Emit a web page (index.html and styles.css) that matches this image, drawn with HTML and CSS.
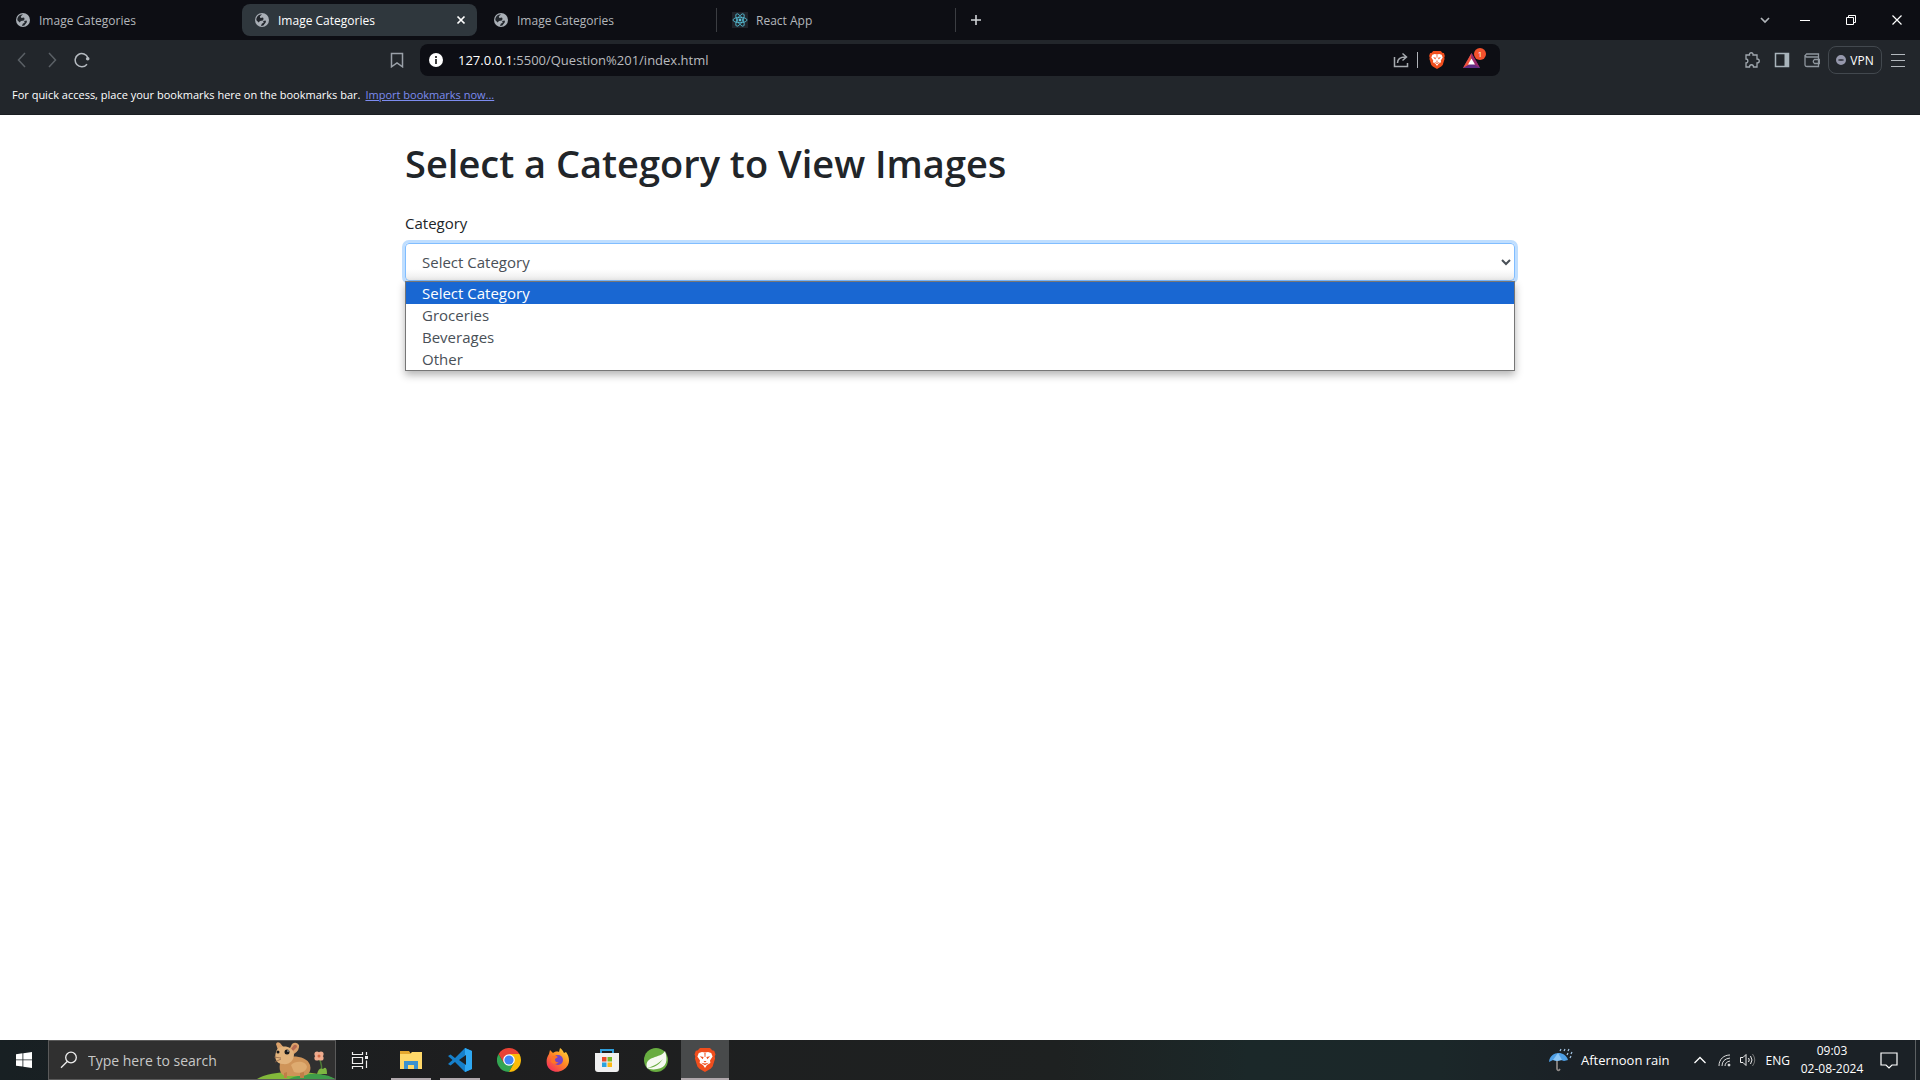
FILE: index.html
```
<!DOCTYPE html>
<html lang="en">
<head>
<meta charset="utf-8">
<title>Image Categories</title>
<link rel="stylesheet" href="styles.css">
</head>
<body>
<svg class="defs" aria-hidden="true">
  <symbol id="globe" viewBox="0 0 16 16">
    <circle cx="8" cy="8" r="7" fill="#a9afb6"/>
    <path d="M8 2.2 5.8 4.6 6.4 6 9 5.6 9.6 7 8.8 8.6 6 9 4.6 10.6 2.4 8.2C2 5 4.6 2.2 8 2.2zM9 9l2.6-.4.4 1.4-2.6 3.6L7 14l.8-2.2 2-1.2z" fill="#23272d"/>
  </symbol>
  <symbol id="brave" viewBox="0 0 24 24">
    <path d="M7 0h10l2.500 2.600 1.700.2L22.500 6.500l-.8 2 .4 2-2.500 8-2 2.300-5.600 3.200-5.600-3.200-2-2.300-2.500-8 .4-2-.8-2L2.800 2.800l1.700-.2z" fill="#f04e1d"/>
    <path d="M12 4.500 15 4l3.200 1L19.600 8.500l-2.600 4 .4 2.600-3.400 2L12 20l-2-2.900-3.400-2L7 12.500 4.400 8.500 5.800 5 9 4z" fill="#fff"/>
    <path d="m6.800 8.300 3.800.6-.8 2.300zM17.200 8.300l-3.800.6.8 2.300zM10.400 13h3.200L12 14.600zM8 14.800l4 .8 4-.8-4 2.400zM11.400 5h1.200l-.2 4h-.8z" fill="#f04e1d"/>
  </symbol>
</svg>

<header class="browser">
  <nav class="tabs" aria-label="Tabs">
    <div class="tab"><button class="tab-face"><svg class="fav"><use href="#globe"/></svg><span>Image Categories</span></button></div>
    <div class="tab active"><button class="tab-face"><svg class="fav"><use href="#globe"/></svg><span>Image Categories</span></button><button class="tab-close" aria-label="Close tab"><svg width="10" height="10" viewBox="0 0 10 10"><path d="m1.500 1.500 7 7m0-7-7 7" stroke="#fff" stroke-width="1.700"/></svg></button></div>
    <div class="tab split"><button class="tab-face"><svg class="fav"><use href="#globe"/></svg><span>Image Categories</span></button></div>
    <div class="tab split"><button class="tab-face"><svg class="fav" viewBox="0 0 16 16"><path fill="#20232a" d="M0 0h16v16H0z"/><g fill="none" stroke="#58c4dc" stroke-width=".8"><ellipse cx="8" cy="8" rx="7" ry="2.700"/><ellipse cx="8" cy="8" rx="7" ry="2.700" transform="rotate(60 8 8)"/><ellipse cx="8" cy="8" rx="7" ry="2.700" transform="rotate(120 8 8)"/></g><circle cx="8" cy="8" r="1.400" fill="#58c4dc"/></svg><span>React App</span></button></div>
    <button class="new-tab" aria-label="New tab"><svg width="12" height="12" viewBox="0 0 12 12"><path d="M6 1v10M1 6h10" stroke="#d0d3d6" stroke-width="1.600"/></svg></button>
    <div class="window-buttons">
      <button aria-label="Search tabs"><svg width="12" height="12" viewBox="0 0 12 12" fill="none"><path d="m2 4 4 4 4-4" stroke="#b0b4b9" stroke-width="1.700"/></svg></button>
      <button aria-label="Minimize"><svg width="10" height="10"><path d="M0 5.500h10" stroke="#fff"/></svg></button>
      <button aria-label="Restore"><svg width="10" height="10" fill="none" stroke="#fff"><path d="M.5 2.500h7v7h-7zM2.500 2.500v-2h7v7h-2"/></svg></button>
      <button aria-label="Close"><svg width="10" height="10"><path d="m.5.500 9 9m0-9-9 9" stroke="#fff" stroke-width="1.200"/></svg></button>
    </div>
  </nav>

  <div class="toolbar">
    <div class="nav-buttons">
      <button aria-label="Back"><svg viewBox="0 0 16 16"><path d="M11 1 4.500 8l6.500 7" stroke="#5b6066"/></svg></button>
      <button aria-label="Forward"><svg viewBox="0 0 16 16"><path d="m5 1 6.500 7L5 15" stroke="#5b6066"/></svg></button>
      <button aria-label="Reload"><svg viewBox="0 0 16 16"><path d="M13 12.200A6.600 6.600 0 1 1 14 6" stroke="#b5bac0"/><circle cx="13.700" cy="6.700" r="1.800" fill="#b5bac0"/></svg></button>
    </div>
    <div class="address-area">
      <button class="bookmark" aria-label="Bookmark this page"><svg viewBox="0 0 16 16"><path d="M2.500 1.500h11v13.300L8 11l-5.500 3.800z" stroke="#9aa0a8"/></svg></button>
      <div class="address">
        <button aria-label="Site information"><svg viewBox="0 0 16 16"><circle cx="8" cy="8" r="7" fill="#fff"/><path d="M8 7v5M8 4v2" stroke="#111" stroke-width="1.600"/></svg></button>
        <a class="url" href="#"><b>127.0.0.1</b>:5500/Question%201/index.html</a>
        <button aria-label="Share"><svg viewBox="0 0 16 16"><path d="M1.500 5v9.500h13V11M4.500 11c0-4 3-6 8-6M9.500 1.500 13.500 5l-4 3.500" stroke="#a7abb0"/></svg></button>
        <i class="rule"></i>
        <button aria-label="Brave Shields"><svg class="shield"><use href="#brave"/></svg></button>
        <button class="rewards" aria-label="Brave Rewards"><svg viewBox="0 0 17 17"><path d="M8.500 1 0 16h17z" fill="#5f2c83"/><path d="M8.500 1 0 16l8.500-5z" fill="#f0523a"/><path d="M8.500 1 17 16l-8.500-5z" fill="#9b2a6c"/><path d="m8.500 6.500 3.500 6H5z" fill="#fff"/></svg><span class="badge">1</span></button>
      </div>
    </div>
    <div class="tools">
      <button aria-label="Extensions"><svg viewBox="0 0 16 16"><path d="M2 3h3.500c-.5-3 4-3 3.500 0H13v4c3-.3 3 4 0 4v4H9.500c0-3-4-3-4 0H2v-4c2.500 0 2.500-4 0-4z" stroke="#a0a7ae" stroke-width="1.300"/></svg></button>
      <button aria-label="Sidebar"><svg viewBox="0 0 16 16"><path d="M1.500 1.500h13v13h-13z" stroke="#a9b4bb"/><path d="M10.500 1.500h4v13h-4z" fill="#a9b4bb"/></svg></button>
      <button aria-label="Wallet"><svg viewBox="0 0 16 16"><path d="M14.500 5V2h-12q-2 1.500 0 3h12v9.500H3q-2 0-2-2V3M15.500 7.500h-5q-2.500 2 0 4h5z" stroke="#8f969e" stroke-width="1.300"/></svg></button>
      <button class="vpn"><i></i>VPN</button>
      <button aria-label="Menu"><svg viewBox="0 0 16 16"><path d="M1 2.500h14M1 8.500h14M1 14.500h14" stroke="#b3b8bd" stroke-width="1.200"/></svg></button>
    </div>
  </div>
  <p class="bookmarks">For quick access, place your bookmarks here on the bookmarks bar. <a href="#">Import bookmarks now...</a></p>
</header>

<main class="page">
  <div class="container">
    <h1>Select a Category to View Images</h1>
    <label for="category">Category</label>
    <div class="field">
      <select id="category">
        <option>Select Category</option>
        <option>Groceries</option>
        <option>Beverages</option>
        <option>Other</option>
      </select>
      <ul class="options" role="listbox" aria-label="Category">
        <li role="option" aria-selected="true">Select Category</li>
        <li role="option">Groceries</li>
        <li role="option">Beverages</li>
        <li role="option">Other</li>
      </ul>
    </div>
  </div>
</main>

<footer class="taskbar">
  <button class="start" aria-label="Start"><svg width="16" height="16" viewBox="0 0 16 16"><path d="M0 2.200 6.500 1.300v6.200H0zM7.300 1.200 16 0v7.500H7.300zM0 8.300h6.500v6.300L0 13.700zM7.300 8.300H16V16l-8.700-1.300z" fill="#fff"/></svg></button>
  <div class="search">
    <svg width="18" height="18" viewBox="0 0 18 18" fill="none" stroke="#eee" stroke-width="1.300"><circle cx="11" cy="6.500" r="5.300"/><path d="M7.200 10.500 1 16.800"/></svg>
    <input type="text" placeholder="Type here to search" aria-label="Search">
    <svg class="critter" viewBox="0 0 78 38">
      <path d="M0 38C12 30 52 27 78 38z" fill="#82b83a"/><path d="M32 38c10-5 34-8 46 0z" fill="#3f9d4a"/>
      <path d="M64 33q2-8-2-16" fill="none" stroke="#4f7d38" stroke-width="1.500"/><path d="M60 33q2-7 6-5 4-4 4 5z" fill="#7db642"/>
      <g fill="#f0ac8e"><circle cx="60" cy="13" r="2.600"/><circle cx="64" cy="17" r="2.600"/><circle cx="60" cy="17" r="2.600"/><circle cx="64" cy="13" r="2.600"/></g><circle cx="62" cy="15" r="1.500" fill="#d26844"/>
      <path d="M25 17C36 14 50 15 53 24c2 8-3 11-10 11H28c-6-2-7-10-3-18z" fill="#cf9459"/><path d="M34 24c5-5 15-4 16 2-1 5-8 7-13 5z" fill="#deab70"/>
      <path d="M21 9 19 3q1-3 4-1l5 6zM32 9l3-6q4-3 7 1 1 5-5 9z" fill="#dba16a"/><path d="m34 8 3-4q3-1 3 2l-4 4z" fill="#b76b52"/>
      <path d="M19 11c2-8 17-7 18 2 0 7-5 11-11 10-7 0-9-6-7-12z" fill="#e2b37c"/><circle cx="30" cy="11" r="2.500" fill="#18191b"/><circle cx="21" cy="11" r="1.500" fill="#18191b"/><circle cx="31" cy="10" r=".7" fill="#fff"/>
      <path d="m24 17-7-1m7 2-6 3" stroke="#8b6045" stroke-width=".7"/><path d="M27 32v5h3v-6M43 32v5h4v-6" fill="#bf7f47"/>
    </svg>
  </div>
  <button class="app task-view" aria-label="Task view"><svg width="18" height="18" viewBox="0 0 18 18" fill="none" stroke="#eee"><path d="M1.500 1v2.500h10V1M1.500 6.500h10v6h-10zM1.500 18v-2.500h10V18M15.500 1v3M15.500 9.500V17" stroke-width="1.200"/><path d="M14 5h3v3h-3z" fill="#eee" stroke="none"/></svg></button>
  <button class="app open" aria-label="File Explorer"><svg viewBox="0 0 24 24"><path d="M1 3h9l2 3h11v15H1z" fill="#e5a82e"/><path d="M1 6h10l2-2h10v17H1z" fill="#ffd869"/><path d="M5 21v-8h14v8h-4v-4H9v4z" fill="#3c91cf"/></svg></button>
  <button class="app open" aria-label="Visual Studio Code"><svg viewBox="0 0 24 24"><path d="m17 0 7 3v18l-7 3L7 14l-4.500 3.500L0 16l4.500-4L0 8l2.500-1.500L7 10z" fill="#1680cb"/><path d="m17 0 7 3v18l-7 3z" fill="#2fa8f2"/><path d="m18 7-7 5 7 5z" fill="#1d2022"/></svg></button>
  <button class="app" aria-label="Chrome"><svg viewBox="0 0 24 24"><path d="M12 24A12 12 0 0 1 1.600 6L7 15l5 3z" fill="#33a552"/><path d="M1.600 6l5.500 9L17 15 12 24z" fill="#33a552"/><path d="M12 6h10.400q1.600 3 1.600 6a12 12 0 0 1-12 12l5-9z" fill="#fbbc08"/><path d="M1.600 6a12 12 0 0 1 20.800 0H12L7 15z" fill="#e94235"/><circle cx="12" cy="12" r="5.800" fill="#fff"/><circle cx="12" cy="12" r="4.600" fill="#4285f4"/></svg></button>
  <button class="app" aria-label="Firefox"><svg viewBox="0 0 24 24"><defs><linearGradient id="fx" x1="1" y1="0" x2=".2" y2="1"><stop stop-color="#ffe23e"/><stop offset=".5" stop-color="#ff8a24"/><stop offset="1" stop-color="#f42d5c"/></linearGradient></defs><path d="M14 0c2 1 3 3 4 5l2-1c3 4 4 9 2 13-5 9-18 9-21 0-1-5 0-8 2-11l1-4 3 3c1-1 4-2 6-1z" fill="url(#fx)"/><circle cx="12" cy="12" r="5" fill="#7644c7"/><path d="M6 8q4-1 6 1l-3 2q0 4 4 3-4 4-8 0z" fill="#ff7425"/></svg></button>
  <button class="app" aria-label="Microsoft Store"><svg viewBox="0 0 24 24"><path d="M6 6V2h12v4" fill="none" stroke="#2f9edb" stroke-width="2"/><path d="M0 5h24v16q0 3-3 3H3q-3 0-3-3z" fill="#f0f0f0"/><path d="M7 9h4.500v4.500H7z" fill="#e84a28"/><path d="M12.500 9H17v4.500h-4.500z" fill="#7aba28"/><path d="M7 14.500h4.500V19H7z" fill="#2ba3dd"/><path d="M12.500 14.500H17V19h-4.500z" fill="#fdb813"/></svg></button>
  <button class="app" aria-label="Spring Tools"><svg viewBox="0 0 24 24"><circle cx="12" cy="12" r="12" fill="#68ad40"/><path d="M21 3c3 9 2 17-8 18-4 1-8 0-10-1C0 7 17 11 21 3z" fill="#f5faf1"/><path d="M3 20c7 0 12-3 16-9-4 4-8 7-16 9z" fill="#68ad40"/></svg></button>
  <button class="app current" aria-label="Brave"><svg viewBox="0 0 24 24"><use href="#brave"/></svg></button>

  <div class="tray">
    <button class="weather"><svg width="24" height="24" viewBox="0 0 24 24"><path d="M8 12v9q1 3 3 0" fill="none" stroke="#8f8a88" stroke-width="1.700"/><path d="M0 14C1 3 16 2 19 12l-4 1-3-1-4 1-4-1z" fill="#4e9fe5"/><path d="m4 12 5-7 4 7-5 1z" fill="#8bc6f5"/><path d="m12 1-1 2m5-2-1 2m5-2-1 2m4 1-1 2m-3-1-1 2m4 1-1 2" stroke="#a8c9e8" stroke-width="1.200"/></svg>Afternoon rain</button>
    <button class="caret" aria-label="Show hidden icons"><svg width="12" height="8" viewBox="0 0 12 8" fill="none"><path d="m.5 7 5.500-5.500L11.500 7" stroke="#fff" stroke-width="1.300"/></svg></button>
    <button class="status" aria-label="Network"><svg width="14" height="14" viewBox="0 0 14 14" fill="none" stroke="#ddd"><path d="M1 13C1 6 6 2 12 2M4 13q0-7 8-8M7 13q0-4 5-5"/><circle cx="11" cy="12" r="1" fill="#fff"/></svg></button>
    <button class="status" aria-label="Volume"><svg width="16" height="14" viewBox="0 0 16 14" fill="none" stroke="#eee"><path d="M.5 4.500H3l3-3v11l-3-3H.5zM8.500 5q1.500 2 0 4M10.500 3q3 4 0 8"/><path d="M12.500 1q4.500 6 0 12" stroke="#777"/></svg></button>
    <button class="lang">ENG</button>
    <button class="clock"><span>09:03</span><span>02-08-2024</span></button>
    <button class="notify" aria-label="Notifications"><svg width="18" height="17" viewBox="0 0 18 17" fill="none" stroke="#fff"><path d="M1 1h16v12h-5l-3 3-3-3H1z" stroke-width="1.200"/></svg></button>
  </div>
</footer>
</body>
</html>
```
FILE: styles.css
```
* { box-sizing: border-box; }

body {
  margin: 0;
  min-height: 100vh;
  display: flex;
  flex-direction: column;
  background: #fff;
  font-family: "Open Sans", "Noto Sans", sans-serif;
}

button {
  display: flex;
  align-items: center;
  justify-content: center;
  margin: 0;
  padding: 0;
  border: 0;
  background: none;
  color: inherit;
  font: inherit;
  white-space: nowrap;
}

svg { flex: none; }
.defs { display: none; }

/* Browser frame */
.browser {
  background: #22262b;
  border-bottom: 1px solid #1a1e22;
  color: #fff;
}

.tabs {
  display: flex;
  height: 40px;
  background: #0d0e14;
  color: #b4b7bc;
  font-size: 12px;
}

.tab {
  display: flex;
  flex: 0 1 239px;
  min-width: 0;
  padding: 4px 1px 4px 3px;
}

.tab-face {
  flex: 1;
  justify-content: flex-start;
  gap: 8px;
  padding: 0 12px;
}

.fav { width: 16px; height: 16px; }

.active .tab-face {
  color: #fff;
  background: #2f373d;
  border-radius: 8px 0 0 8px;
}

.tab-close {
  width: 32px;
  background: #2f373d;
  border-radius: 0 8px 8px 0;
}

.split {
  background: linear-gradient(#3b3d42, #3b3d42) no-repeat right center / 1px 24px;
}

.new-tab { width: 40px; }

.window-buttons {
  display: flex;
  margin-left: auto;
}

.window-buttons button { width: 46px; }
.window-buttons button:first-child { width: 34px; }

.toolbar {
  display: grid;
  grid-template-columns: 379px minmax(0, 1121px) minmax(200px, 1fr);
  align-items: center;
  height: 40px;
}

.toolbar svg {
  width: 16px;
  height: 16px;
  fill: none;
  stroke-width: 1.5;
}

.nav-buttons {
  display: flex;
  gap: 14px;
  padding-left: 14px;
}

.address-area {
  display: flex;
  align-items: center;
  gap: 15px;
  padding-left: 10px;
}

.address {
  display: flex;
  flex: 1;
  align-items: center;
  height: 32px;
  padding: 0 20px 0 8px;
  border-radius: 8px;
  background: #0d0e14;
}

.url {
  flex: 1;
  margin-left: 14px;
  color: #b9bbbf;
  font-size: 13px;
  text-decoration: none;
}

.url b { color: #fff; font-weight: 400; }

.rule {
  width: 1px;
  height: 16px;
  margin: 0 10px 0 8px;
  background: #b0b3b8;
}

.toolbar .shield { width: 18px; height: 18px; }
.toolbar .rewards svg { width: 17px; height: 17px; }

.rewards {
  position: relative;
  margin-left: 17px;
}

.badge {
  position: absolute;
  top: -4px;
  left: 11px;
  width: 12px;
  border-radius: 6px;
  background: #f4512c;
  font-size: 8px;
  line-height: 12px;
}

.tools {
  display: flex;
  align-items: center;
  justify-content: flex-end;
  gap: 14px;
  padding-right: 14px;
}

.vpn {
  gap: 4px;
  width: 54px;
  height: 28px;
  margin: 0 -6px;
  border: 1px solid #42484e;
  border-radius: 8px;
  font-size: 12px;
}

.vpn i {
  width: 10px;
  height: 10px;
  border: 4px solid #9698ac;
  border-width: 4px 2px;
  border-radius: 5px;
  background: #3c3e4a;
}

.bookmarks {
  display: flex;
  gap: 5px;
  margin: 0;
  padding: 5px 12px 9px;
  font-size: 11px;
  line-height: 20px;
}

.bookmarks a { color: #7d8cf0; }

/* Page */
.page { flex: 1; }

.container {
  max-width: 1140px;
  margin: 0 auto;
  padding: 24px 15px;
  color: #212529;
  font-size: 15px;
  line-height: 24px;
}

h1 {
  margin: 0 0 24px;
  font-size: 38px;
  font-weight: 600;
  line-height: 48px;
}

label { display: block; margin-bottom: 8px; }

.field { position: relative; }

select {
  display: block;
  width: 100%;
  height: 38px;
  padding: 6px 12px;
  border: 1px solid #80bdff;
  border-radius: 4px;
  background: linear-gradient(#fff 70%, #ececec);
  box-shadow: 0 0 0 3px #bfdeff;
  color: #495057;
  font: inherit;
}

.options {
  position: absolute;
  top: 100%;
  left: 0;
  right: 0;
  margin: 0;
  padding: 0;
  border: 1px solid #767676;
  background: #fff;
  box-shadow: 0 4px 8px rgba(0, 0, 0, .3);
  color: #495057;
  line-height: 22px;
  list-style: none;
}

.options li { padding: 0 16px; }

.options [aria-selected] {
  background: #1967d2;
  color: #fff;
}

/* Taskbar */
.taskbar {
  display: flex;
  height: 40px;
  background: linear-gradient(90deg, #182023, #1e1e1f 25%, #1e2121 55%, #1b2829 65%, #1b2729 75%, #1b2126 82%);
  color: #fff;
  font-size: 13px;
}

.start { width: 48px; }

.search {
  display: flex;
  align-items: center;
  width: 288px;
  padding-left: 11px;
  border: 1px solid #5a5a5a;
  background: #303030;
}

.search input {
  flex: 1;
  min-width: 0;
  padding: 0 0 0 10px;
  border: 0;
  background: none;
  color: #fff;
  font: inherit;
  font-size: 14px;
}

.search input::placeholder { color: #c8c8c8; }
.critter { width: 78px; height: 38px; }

.app {
  width: 40px;
  margin-right: 9px;
}

.app svg { width: 24px; height: 24px; }
.app.task-view { width: 48px; margin-right: 7px; }
.app.task-view svg { width: 18px; height: 18px; }
.open { border-bottom: 2px solid #b0a8ac; padding-top: 2px; }

.app.current {
  width: 48px;
  margin: 0 0 0 -4px;
  padding-top: 2px;
  border-bottom: 2px solid #b0a8ac;
  background: #484a4b;
}

.tray {
  display: flex;
  margin-left: auto;
  padding-right: 4px;
}

.weather { gap: 8px; margin-right: 24px; }
.caret { margin-right: 12px; }
.status { margin-right: 8px; }
.status + .lang { margin-left: 2px; }
.lang { margin-right: 12px; font-size: 12px; }

.clock {
  flex-direction: column;
  width: 60px;
  font-size: 12px;
  line-height: 18px;
}

.notify {
  width: 54px;
  border-right: 1px solid #5c6062;
}
```
